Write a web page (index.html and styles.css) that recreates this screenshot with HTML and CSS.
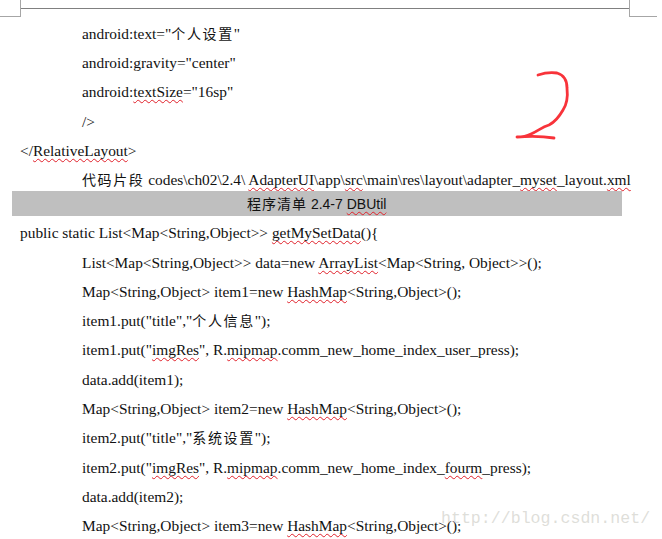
FILE: index.html
```html
<!DOCTYPE html>
<html lang="zh">
<head>
<meta charset="utf-8">
<title>DBUtil</title>
<link rel="stylesheet" href="styles.css">
</head>
<body>
<div class="page">
  <div class="marks">
    <div class="corner"></div>
    <div class="rule"></div>
    <div class="corner corner-right"></div>
  </div>
  <div class="doc">
    <p class="line in">android:text="<span class="cjk">个人设置</span>"</p>
    <p class="line in">android:gravity="center"</p>
    <p class="line in">android:<span class="sp">textSize</span>="16sp"</p>
    <p class="line in">/&gt;</p>
    <p class="line">&lt;/<span class="sp">RelativeLayout</span>&gt;</p>
    <p class="line in cap"><span class="cjk">代码片段</span> codes\ch02\2.4\ <span class="sp">AdapterUI</span>\app\<span class="sp">src</span>\main\res\layout\adapter_<span class="sp">myset</span>_layout.<span class="sp">xml</span></p>
    <div class="bar"><span class="cjk">程序清单</span> 2.4-7 <span class="sp">DBUtil</span></div>
    <p class="line">public static List&lt;Map&lt;String,Object&gt;&gt; <span class="sp">getMySetData</span>(){</p>
    <p class="line in">List&lt;Map&lt;String,Object&gt;&gt; data=new <span class="sp">ArrayList</span>&lt;Map&lt;String, Object&gt;&gt;();</p>
    <p class="line in">Map&lt;String,Object&gt; item1=new <span class="sp">HashMap</span>&lt;String,Object&gt;();</p>
    <p class="line in">item1.put("title","<span class="cjk">个人信息</span>");</p>
    <p class="line in">item1.put("<span class="sp">imgRes</span>", R.<span class="sp">mipmap</span>.comm_new_home_index_user_press);</p>
    <p class="line in">data.add(item1);</p>
    <p class="line in">Map&lt;String,Object&gt; item2=new <span class="sp">HashMap</span>&lt;String,Object&gt;();</p>
    <p class="line in">item2.put("title","<span class="cjk">系统设置</span>");</p>
    <p class="line in">item2.put("<span class="sp">imgRes</span>", R.<span class="sp">mipmap</span>.comm_new_home_index_<span class="sp">fourm</span>_press);</p>
    <p class="line in">data.add(item2);</p>
    <p class="line in">Map&lt;String,Object&gt; item3=new <span class="sp">HashMap</span>&lt;String,Object&gt;();</p>
  </div>
  <svg class="two" width="662" height="539" viewBox="0 0 662 539" aria-hidden="true">
    <path d="M538 75 C544 73 551 72 557 73 C564 75 567 81 567 88 C568 97 567 104 563 110 C559 117 555 122 549 125 C542 127 538 131 531 134 C527 136 522 137 517 137 C529 136 542 136 554 138" fill="none" stroke="#f8333a" stroke-width="2.8" stroke-linecap="round" stroke-linejoin="round"/>
  </svg>
  <div class="mark">http://blog.csdn.net/</div>
</div>
</body>
</html>
```
FILE: styles.css
```css
html, body {
  margin: 0;
  padding: 0;
  background: #fff;
}
.page {
  position: relative;
  width: 662px;
  height: 539px;
  overflow: hidden;
  font-family: "Liberation Serif", "Noto Sans CJK SC", serif;
  font-size: 15.4px;
  color: #111;
}
.marks {
  display: flex;
  align-items: flex-start;
  height: 18.7px;
}
.corner {
  width: 20px;
  height: 16px;
  border-right: 1px solid #a6a6a6;
  border-bottom: 1px solid #a6a6a6;
}
.rule {
  width: 608px;
  height: 8px;
  border-bottom: 1px solid #808080;
}
.corner-right {
  width: 27px;
  border-right: 0;
  border-left: 1px solid #a6a6a6;
}
.doc {
  display: flex;
  flex-direction: column;
}
.line {
  margin: 0;
  height: 29.3px;
  line-height: 29.3px;
  padding-left: 20px;
  white-space: nowrap;
}
.in {
  padding-left: 82px;
}
.cap {
  height: 25.6px;
}
.cjk {
  font-family: "Noto Sans CJK SC", sans-serif;
  font-size: 14px;
  letter-spacing: 1.6px;
}
.sp {
  text-decoration: underline wavy #e0202a 1px;
  text-underline-offset: 2px;
  text-decoration-skip-ink: none;
}
.bar {
  width: 610px;
  height: 25px;
  margin: 0 0 2.5px 12px;
  padding-left: 235px;
  box-sizing: border-box;
  background: #bfbfbf;
  font-family: "Liberation Sans", "Noto Sans CJK SC", sans-serif;
  font-size: 14px;
  line-height: 24px;
  white-space: nowrap;
}
.bar .cjk {
  letter-spacing: 1px;
}
.two {
  position: absolute;
  left: 0;
  top: 0;
}
.mark {
  position: absolute;
  left: 441px;
  top: 508px;
  font-family: "Liberation Mono", monospace;
  font-size: 16.6px;
  line-height: 22px;
  color: rgba(190, 190, 180, 0.5);
  white-space: nowrap;
}
```
